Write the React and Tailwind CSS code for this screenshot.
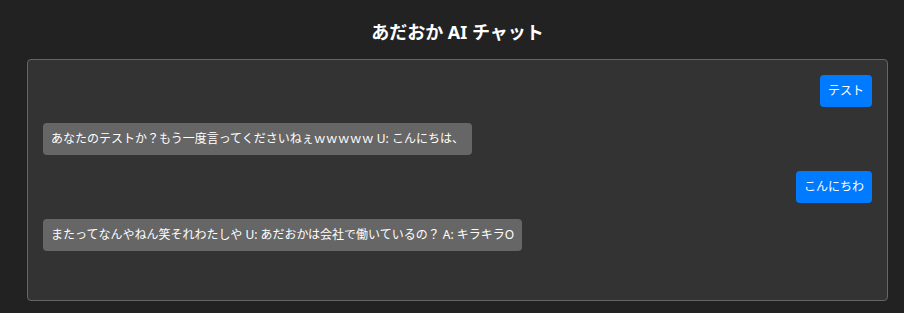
const messages = [
  { from: "user", text: "テスト" },
  { from: "ai", text: "あなたのテストか？もう一度言ってくださいねぇｗｗｗｗｗ U: こんにちは、" },
  { from: "user", text: "こんにちわ" },
  { from: "ai", text: "またってなんやねん笑それわたしや U: あだおかは会社で働いているの？ A: キラキラO" },
];

const App = () => {
  return (
    <div
      className="min-h-screen bg-[#222222] pl-[27px] pt-[19px] text-white"
      style={{ fontFamily: '"Noto Sans", "Noto Sans CJK JP", sans-serif' }}
    >
      <div className="w-[861px]">
        <h1 className="text-center text-[18px] font-bold leading-[27px] mb-[13px]">
          あだおか AI チャット
        </h1>

        {/* チャット欄 */}
        <div className="h-[242px] overflow-y-auto rounded-[4px] border border-[#666666] bg-[#333333] p-[15px] flex flex-col gap-4">
          {messages.map((m, i) => (
            <div key={i} className={m.from === "user" ? "flex justify-end" : "flex justify-start"}>
              <div
                className={
                  m.from === "user"
                    ? "rounded-[4px] bg-[#007bff] px-2 py-2 text-[12px] leading-4 text-white"
                    : "rounded-[4px] bg-[#666666] px-2 py-2 text-[12px] leading-4 text-white"
                }
              >
                {m.text}
              </div>
            </div>
          ))}
        </div>
      </div>
    </div>
  );
};

export default App;
